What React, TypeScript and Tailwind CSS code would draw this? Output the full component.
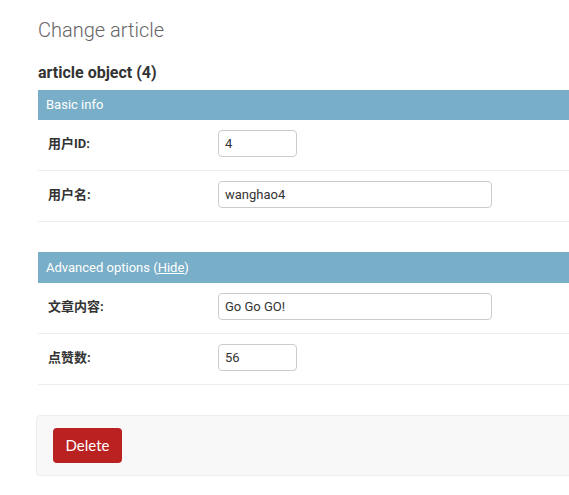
const rows1 = [
  { label: "用户ID:", value: "4", wide: false },
  { label: "用户名:", value: "wanghao4", wide: true },
];
const rows2 = [
  { label: "文章内容:", value: "Go Go GO!", wide: true },
  { label: "点赞数:", value: "56", wide: false },
];

function Row({ label, value, wide }: { label: string; value: string; wide: boolean }) {
  return (
    <div className="flex items-center border-b border-[#eee] pl-[10px] pt-[10px] pb-[13px]">
      <label className="w-[170px] text-[13px] font-bold text-[#333]">{label}</label>
      <div
        className={`${wide ? "w-[274px]" : "w-[79px]"} h-[27px] rounded-[4px] border border-[#ccc] px-[6px] flex items-center text-[13px] text-[#333]`}
      >
        {value}
      </div>
    </div>
  );
}

export default function App() {
  return (
    <div className="w-full overflow-hidden bg-white font-['Roboto','Noto_Sans_CJK_SC',sans-serif]">
      <div className="w-[1000px] pl-[38px] pt-[17px]">
        <h1 className="text-[20px] leading-[26px] font-light text-[#666]">Change article</h1>
        <h2 className="mt-[20px] text-[16px] leading-[20px] font-bold text-[#333]">article object (4)</h2>

        <div className="mt-[7px]">
          <div className="h-[30px] bg-[#79aec8] px-[8px] flex items-center text-[13px] text-white">Basic info</div>
          {rows1.map((r) => (
            <Row key={r.label} {...r} />
          ))}
        </div>

        <div className="mt-[30px]">
          <div className="h-[31px] bg-[#79aec8] px-[8px] flex items-center text-[13px] text-white">
            Advanced options (<span className="underline">Hide</span>)
          </div>
          {rows2.map((r) => (
            <Row key={r.label} {...r} />
          ))}
        </div>

        <div className="mt-[30px] ml-[-2px] h-[61px] rounded-[4px] border border-[#eee] bg-[#f8f8f8] flex items-center px-[16px]">
          <button className="h-[35px] w-[69px] rounded-[4px] bg-[#ba2121] text-white text-[15px] font-['Lato',sans-serif]">
            Delete
          </button>
        </div>
      </div>
    </div>
  );
}
